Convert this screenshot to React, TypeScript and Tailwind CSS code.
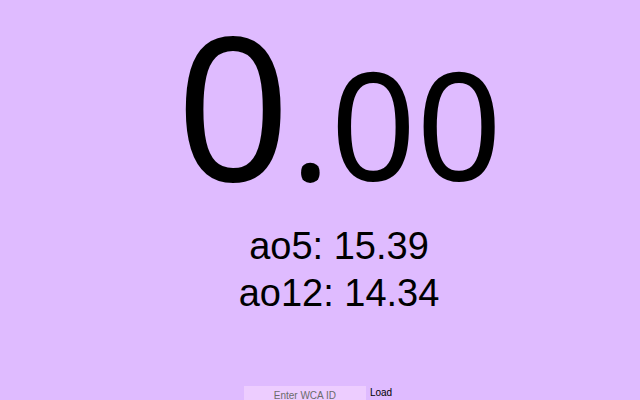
export default function App() {
  return (
    <div className="w-[640px] h-[400px] overflow-hidden bg-[#dfbbff] flex flex-col items-center text-black">
      <div className="pl-[38px] flex flex-col items-center">
        <div className="mt-[4px] leading-none text-[200px] font-['Noto_Sans',sans-serif] whitespace-nowrap">
          0<span className="text-[150px]">.00</span>
        </div>
        <div className="mt-[19px] font-['Liberation_Sans',Arial,sans-serif] text-[38px] leading-[47px] text-center whitespace-nowrap">
          <div>ao5: 15.39</div>
          <div>ao12: 14.34</div>
        </div>
      </div>
      <div className="mt-[69px] flex items-start font-['Liberation_Sans',Arial,sans-serif]">
        <input
          type="text"
          placeholder="Enter WCA ID"
          className="w-[122px] h-[18px] bg-[#edcdff] text-center text-[10px] placeholder:text-[#6b6b6b] outline-none border-0"
        />
        <button type="button" className="h-[18px] px-[4px] text-[10px] leading-[12px] pb-[4px] bg-transparent">
          Load
        </button>
      </div>
    </div>
  );
}
